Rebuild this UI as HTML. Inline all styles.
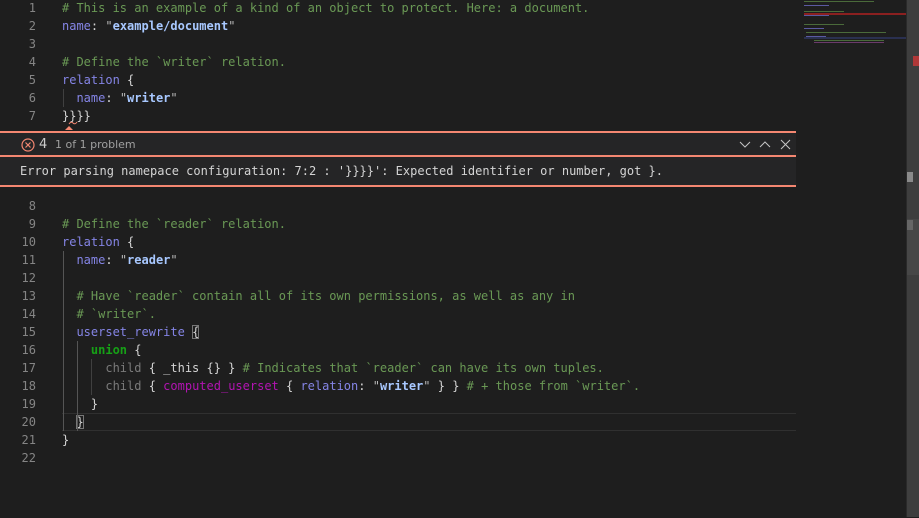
<!DOCTYPE html>
<html><head><meta charset="utf-8"><style>
body{margin:0;width:919px;height:517px;background:#1e1e1e;overflow:hidden;position:relative;font-family:"DejaVu Sans Mono","Liberation Mono",monospace;font-size:12px;}
#w{position:absolute;left:0;top:1px;width:919px;height:517px}
.l{position:absolute;left:62px;height:18px;line-height:18px;white-space:pre;color:#d4d4d4;}
.n{position:absolute;left:0;width:36px;text-align:right;height:18px;line-height:18px;color:#858585;}
.c{color:#6a9955}.k{color:#8585e6}.s{color:#a8c8ff;font-weight:bold}.q{color:#bbbbbb}
.u{color:#16a016;font-weight:bold}.m{color:#b214b2}.g{color:#7a7a7a}
.ig{position:absolute;width:1px;background:#404040}
</style></head><body><div id="w">
<div class="n" style="top:-2px">1</div><div class="l c" style="top:-2px"># This is an example of a kind of an object to protect. Here: a document.</div>
<div class="n" style="top:16px">2</div><div class="l" style="top:16px"><span class="k">name</span>: <span class="q">"</span><span class="s">example/document</span><span class="q">"</span></div>
<div class="n" style="top:34px">3</div>
<div class="n" style="top:52px">4</div><div class="l c" style="top:52px"># Define the `writer` relation.</div>
<div class="n" style="top:70px">5</div><div class="l" style="top:70px"><span class="k">relation</span> {</div>
<div class="n" style="top:88px">6</div><div class="l" style="top:88px">  <span class="k">name</span>: <span class="q">"</span><span class="s">writer</span><span class="q">"</span></div>
<div class="n" style="top:106px">7</div><div class="l" style="top:106px">}}}}</div>
<div class="ig" style="left:63px;top:88px;height:18px"></div>
<svg style="position:absolute;left:64px;top:119px" width="14" height="11"><path d="M1 10 L5 6 L9 10 Z" fill="#f48771"/><path d="M5 4 Q7 1 9 3 T13 2" stroke="#f48771" fill="none" stroke-width="1"/></svg>
<div style="position:absolute;left:0;top:130px;width:796px;height:56px;background:#252526;border-top:2px solid #f48771;border-bottom:2px solid #f48771;box-sizing:border-box;">
 <div style="position:absolute;left:0;top:22px;width:796px;height:2px;background:#f48771"></div>
 <svg style="position:absolute;left:21px;top:5px" width="14" height="14"><circle cx="7" cy="7" r="6" stroke="#f48771" fill="none" stroke-width="1.2"/><path d="M4.5 4.5L9.5 9.5M9.5 4.5L4.5 9.5" stroke="#f48771" stroke-width="1.2"/></svg>
 <div style="position:absolute;left:39px;top:4px;font-family:'DejaVu Sans','Liberation Sans',sans-serif;font-size:13px;color:#cccccc">4</div>
 <div style="position:absolute;left:55px;top:5px;font-family:'DejaVu Sans','Liberation Sans',sans-serif;font-size:11px;color:#a0a0a0">1 of 1 problem</div>
 <svg style="position:absolute;left:738px;top:5px" width="56" height="14"><path d="M2 4l5 5 5-5" stroke="#c5c5c5" fill="none"/><path d="M22 9l5-5 5 5" stroke="#c5c5c5" fill="none"/><path d="M43 2l9 9M52 2l-9 9" stroke="#c5c5c5" fill="none"/></svg>
 <div style="position:absolute;left:20px;top:31px;color:#d4d4d4;white-space:pre">Error parsing namepace configuration: 7:2 : '}}}}': Expected identifier or number, got }.</div>
</div>
<div class="n" style="top:196px">8</div>
<div class="n" style="top:214px">9</div><div class="l c" style="top:214px"># Define the `reader` relation.</div>
<div class="n" style="top:232px">10</div><div class="l" style="top:232px"><span class="k">relation</span> {</div>
<div class="n" style="top:250px">11</div><div class="l" style="top:250px">  <span class="k">name</span>: <span class="q">"</span><span class="s">reader</span><span class="q">"</span></div>
<div class="n" style="top:268px">12</div>
<div class="n" style="top:286px">13</div><div class="l c" style="top:286px">  # Have `reader` contain all of its own permissions, as well as any in</div>
<div class="n" style="top:304px">14</div><div class="l c" style="top:304px">  # `writer`.</div>
<div class="n" style="top:322px">15</div><div class="l" style="top:322px">  <span class="k">userset_rewrite</span> <span style="outline:1px solid #777;outline-offset:-1px">{</span></div>
<div class="n" style="top:340px">16</div><div class="l" style="top:340px">    <span class="u">union</span> {</div>
<div class="n" style="top:358px">17</div><div class="l" style="top:358px">      <span class="g">child</span> { _this {} } <span class="c"># Indicates that `reader` can have its own tuples.</span></div>
<div class="n" style="top:376px">18</div><div class="l" style="top:376px">      <span class="g">child</span> { <span class="m">computed_userset</span> { <span class="k">relation</span>: <span class="q">"</span><span class="s">writer</span><span class="q">"</span> } } <span class="c"># + those from `writer`.</span></div>
<div class="n" style="top:394px">19</div><div class="l" style="top:394px">    }</div>
<div style="position:absolute;left:62px;top:412px;width:734px;height:16px;border-top:1px solid #303030;border-bottom:1px solid #303030"></div>
<div class="n" style="top:412px">20</div><div class="l" style="top:412px">  <span style="outline:1px solid #777;outline-offset:-1px">}</span></div>
<div class="n" style="top:430px">21</div><div class="l" style="top:430px">}</div>
<div class="n" style="top:448px">22</div>
<div class="ig" style="left:63px;top:250px;height:180px;background:#555"></div>
<div class="ig" style="left:77px;top:340px;height:90px;background:#555"></div>
<div class="ig" style="left:91px;top:358px;height:36px"></div>
</div>
<div style="position:absolute;left:804px;top:0;width:102px;height:517px">
 <div style="position:absolute;left:0;top:1px;width:70px;height:1px;background:#4a6a3a"></div>
 <div style="position:absolute;left:0;top:5px;width:25px;height:1px;background:#5a5aa0"></div>
 <div style="position:absolute;left:0;top:11px;width:40px;height:1px;background:#4a6a3a"></div>
 <div style="position:absolute;left:0;top:13px;width:102px;height:2px;background:#8b2020"></div>
 <div style="position:absolute;left:0;top:15px;width:25px;height:1px;background:#5a5aa0"></div>
 <div style="position:absolute;left:0;top:24px;width:40px;height:1px;background:#4a6a3a"></div>
 <div style="position:absolute;left:0;top:28px;width:20px;height:1px;background:#5a5aa0"></div>
 <div style="position:absolute;left:2px;top:32px;width:80px;height:1px;background:#4a6a3a"></div>
 <div style="position:absolute;left:2px;top:36px;width:20px;height:1px;background:#5a5aa0"></div>
 <div style="position:absolute;left:10px;top:40px;width:70px;height:1px;background:#4a6a3a"></div>
 <div style="position:absolute;left:10px;top:42px;width:70px;height:1px;background:#6a3a6a"></div>
 <div style="position:absolute;left:0;top:37px;width:102px;height:2px;background:#2a3050"></div>
</div>
<div style="position:absolute;left:906px;top:0;width:13px;height:517px;background:#3e3e3e;border-left:1px solid #2a2a2a"></div>
<div style="position:absolute;left:913px;top:56px;width:6px;height:10px;background:#b03838"></div>
<div style="position:absolute;left:907px;top:172px;width:6px;height:10px;background:#8a8a8a"></div>
<div style="position:absolute;left:907px;top:220px;width:6px;height:10px;background:#8a8a8a"></div>
<div style="position:absolute;left:907px;top:219px;width:12px;height:56px;background:#4f4f4f;opacity:.6"></div>
</body></html>
